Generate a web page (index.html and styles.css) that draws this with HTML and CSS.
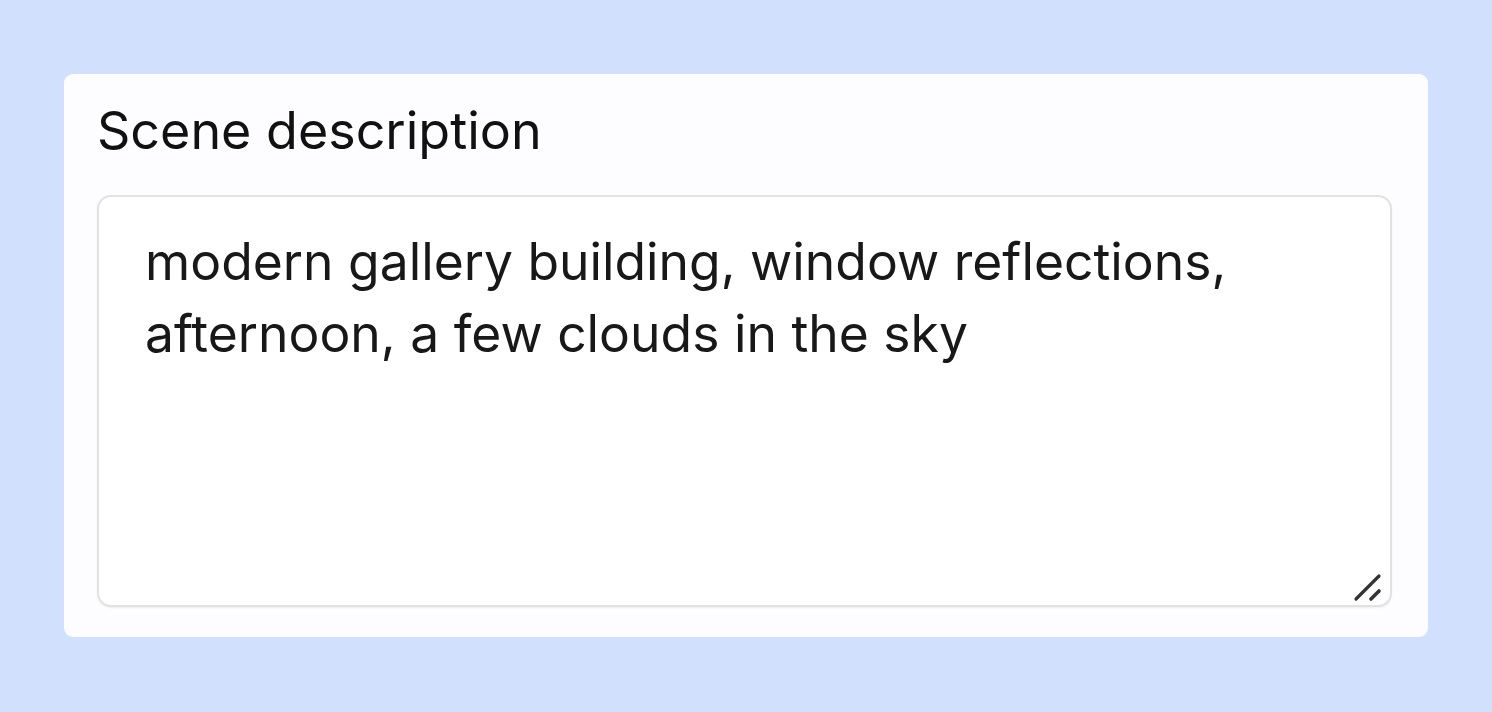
FILE: index.html
```html
<!DOCTYPE html>
<html lang="en">
<head>
  <meta charset="UTF-8" />
  <meta name="viewport" content="width=device-width, initial-scale=1.0" />
  <title>Scene description</title>
  <link rel="stylesheet" href="styles.css">
</head>
<body>
  <div class="card">
    <label class="field-label" for="scene">Scene description</label>
    <div class="field-wrap">
      <textarea id="scene" class="field-input">modern gallery building, window reflections, afternoon, a few clouds in the sky</textarea>
      <!-- resize grip -->
      <svg class="grip" width="30" height="30" viewBox="0 0 30 30">
        <path d="M3 27 L26 4" stroke="#333" stroke-width="3.2" stroke-linecap="round" />
        <path d="M18 27 L26 19" stroke="#333" stroke-width="3.6" stroke-linecap="round" />
      </svg>
    </div>
  </div>
</body>
</html>
```

FILE: styles.css
```css
/* RESET & BASE */
* {
  margin: 0;
  padding: 0;
  box-sizing: border-box;
}
body {
  font-family: Inter, "Noto Sans", sans-serif;
  background: #d0e0fd;
  color: #1a1a1a;
  padding: 74px 64px 0 64px;
}
/* CARD */
.card {
  width: 1364px;
  height: 563px;
  background: #fdfcff;
  border-radius: 9px;
  padding: 25px 36px 30px 33px;
  display: flex;
  flex-direction: column;
  gap: 32px;
}
.field-label {
  font-size: 52px;
  line-height: 64px;
  color: #111;
}
/* TEXTAREA */
.field-wrap {
  position: relative;
  flex: 1;
  display: flex;
}
.field-input {
  flex: 1;
  width: 100%;
  font-family: inherit;
  font-size: 51.6px;
  line-height: 72px;
  color: #181818;
  background: #fff;
  border: 2px solid #e2e2e5;
  border-radius: 14px;
  padding: 28px 46px;
  resize: none;
  outline: none;
  box-shadow: 0 1px 2px rgba(0, 0, 0, 0.06);
}
.grip {
  position: absolute;
  right: 9px;
  bottom: 5px;
  pointer-events: none;
}
```
